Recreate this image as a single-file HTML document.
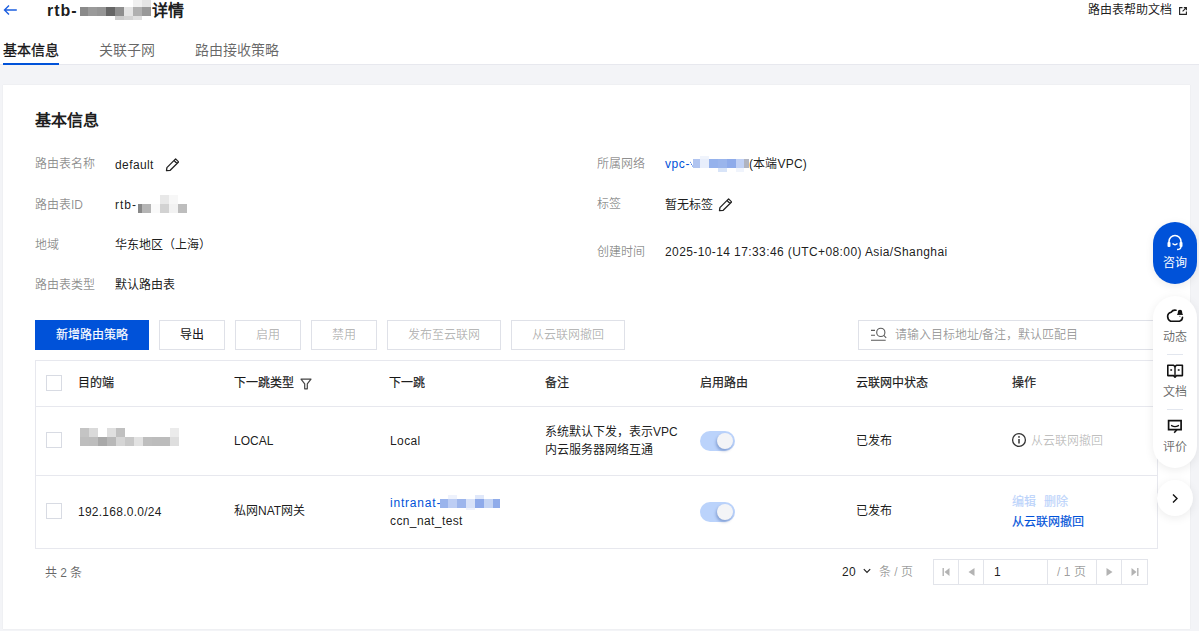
<!DOCTYPE html>
<html lang="zh-CN"><head><meta charset="utf-8">
<style>
*{box-sizing:border-box;margin:0;padding:0}
html,body{width:1199px;height:631px;overflow:hidden;background:#f3f4f7;font-family:"Liberation Sans",sans-serif;font-size:12px;color:rgba(0,0,0,.9)}
.a{position:absolute;white-space:nowrap;line-height:16px}
.l{letter-spacing:.4px}
.md{-webkit-text-stroke:.15px currentColor}
#hdr{position:absolute;left:0;top:0;width:1199px;height:65px;background:#fff;border-bottom:1px solid #e7e8ee}
#card{position:absolute;left:3px;top:85px;width:1187px;height:544px;background:#fff;box-shadow:0 0 1px rgba(0,0,0,.1)}
.lbl{color:rgba(0,0,0,.45)}
.m{position:absolute}
.btn{position:absolute;top:320px;height:30px;border:1px solid #dfe1e8;background:#fff;text-align:center;line-height:28px;color:rgba(0,0,0,.9)}
.btn.dis{color:rgba(0,0,0,.3)}
.th{position:absolute;top:375px;line-height:16px;-webkit-text-stroke:.25px currentColor;color:rgba(0,0,0,.85);white-space:nowrap}
.cb{position:absolute;width:16px;height:16px;border:1px solid #d8dbe3;background:#fff}
.sw{position:absolute;width:35px;height:20px;border-radius:10px;background:#bbd3fb}
.sw i{position:absolute;left:17px;top:2px;width:16px;height:16px;border-radius:50%;background:#f3f4f7;box-shadow:-1px 2px 3px rgba(0,40,120,.3)}
.pg{position:absolute;top:559px;height:26px;border:1px solid #e2e4ea}
</style></head><body>
<div id="hdr"></div>
<!-- back arrow -->
<svg class="m" style="left:3px;top:4px" width="16" height="12" viewBox="0 0 16 12"><path d="M6 1.5L1.5 6L6 10.5M1.5 6H13.8" fill="none" stroke="#1d5fe0" stroke-width="1.4"/></svg>
<div class="a" style="left:47px;top:1px;font-size:16px;font-weight:bold;line-height:20px;letter-spacing:1px">rtb-</div>
<!-- title mosaic -->
<div class="m" style="left:80px;top:7px;width:8px;height:9px;background:#8a8a8a"></div>
<div class="m" style="left:88px;top:7px;width:9px;height:9px;background:#9a9a9a"></div>
<div class="m" style="left:97px;top:7px;width:9px;height:9px;background:#959595"></div>
<div class="m" style="left:106px;top:7px;width:9px;height:9px;background:#666"></div>
<div class="m" style="left:115px;top:7px;width:9px;height:9px;background:#8e8e8e"></div>
<div class="m" style="left:124px;top:7px;width:9px;height:9px;background:#e4e4e4"></div>
<div class="m" style="left:133px;top:7px;width:9px;height:9px;background:#b0b0b0"></div>
<div class="m" style="left:142px;top:7px;width:9px;height:9px;background:#999"></div>
<div class="m" style="left:133px;top:0px;width:9px;height:7px;background:#f0f0f0"></div>
<div class="m" style="left:142px;top:0px;width:9px;height:7px;background:#e4e4e4"></div>
<div class="m" style="left:115px;top:16px;width:9px;height:4px;background:#ccc"></div>
<div class="m" style="left:124px;top:16px;width:9px;height:4px;background:#d4d4d4"></div>
<div class="m" style="left:133px;top:16px;width:9px;height:4px;background:#e0e0e0"></div>
<div class="a" style="left:152px;top:1px;font-size:16px;font-weight:bold;line-height:20px">详情</div>

<div class="a" style="left:1088px;top:2px">路由表帮助文档</div>
<svg class="m" style="left:1178px;top:6px" width="10" height="10" viewBox="0 0 10 10"><path d="M4.5 1.6H1.6V8.4H8.4V5.5M5.8 1.6H8.4V4.2M8.4 1.6L4.6 5.4" fill="none" stroke="#222" stroke-width="1.1"/></svg>
<!-- tabs -->
<div class="a" style="left:3px;top:40px;font-size:14px;line-height:20px;-webkit-text-stroke:.35px currentColor">基本信息</div>
<div class="a" style="left:99px;top:40px;font-size:14px;line-height:20px;color:rgba(0,0,0,.6)">关联子网</div>
<div class="a" style="left:195px;top:40px;font-size:14px;line-height:20px;color:rgba(0,0,0,.6)">路由接收策略</div>
<div class="m" style="left:3px;top:63px;width:56px;height:2px;background:#0052d9"></div>

<div id="card"></div>
<div class="a" style="left:35px;top:111px;font-size:16px;font-weight:bold;line-height:20px">基本信息</div>

<div class="a lbl" style="left:35px;top:156px">路由表名称</div>
<div class="a l" style="left:115px;top:157px">default</div>
<svg class="m" style="left:165px;top:158px" width="14" height="14" viewBox="0 0 14 14"><path d="M10.6 0.9L13.6 3.9L5.2 12.3L1.5 12.6L1.9 9.6Z M9 2.5L12 5.5" fill="none" stroke="#222" stroke-width="1.3" stroke-linejoin="round"/></svg>
<div class="a lbl" style="left:35px;top:197px">路由表ID</div>
<div class="a" style="left:115px;top:197px;letter-spacing:1px">rtb-</div>
<div class="m" style="left:138px;top:204px;width:4px;height:9px;background:#888"></div>
<div class="m" style="left:142px;top:204px;width:9px;height:9px;background:#b5b5b5"></div>
<div class="m" style="left:151px;top:204px;width:9px;height:9px;background:#fafafa"></div>
<div class="m" style="left:160px;top:204px;width:9px;height:9px;background:#d2d2d2"></div>
<div class="m" style="left:169px;top:204px;width:9px;height:9px;background:#f2f2f2"></div>
<div class="m" style="left:178px;top:204px;width:9px;height:9px;background:#bdbdbd"></div>
<div class="m" style="left:160px;top:195px;width:9px;height:9px;background:#e8e8e8"></div>
<div class="m" style="left:169px;top:195px;width:9px;height:9px;background:#f7f7f7"></div>
<div class="a lbl" style="left:35px;top:237px">地域</div>
<div class="a" style="left:115px;top:237px">华东地区（上海）</div>
<div class="a lbl" style="left:35px;top:277px">路由表类型</div>
<div class="a" style="left:115px;top:277px">默认路由表</div>

<div class="a lbl" style="left:597px;top:156px">所属网络</div>
<div class="a" style="left:665px;top:156px;color:#0052d9;letter-spacing:.6px">vpc-</div>
<div class="m" style="left:690px;top:161px;width:3px;height:7px;background:linear-gradient(60deg,transparent 45%,#4d7fe6 50%,transparent 62%)"></div>
<div class="m" style="left:693px;top:159px;width:7px;height:9px;background:#b0c4f0"></div>
<div class="m" style="left:700px;top:159px;width:9px;height:9px;background:#e8eefb"></div>
<div class="m" style="left:709px;top:159px;width:9px;height:9px;background:#95b2ec"></div>
<div class="m" style="left:718px;top:159px;width:9px;height:9px;background:#9ab5ec"></div>
<div class="m" style="left:727px;top:159px;width:9px;height:9px;background:#8eabea"></div>
<div class="m" style="left:736px;top:159px;width:8px;height:9px;background:#c0d0f4"></div>
<div class="m" style="left:744px;top:159px;width:5px;height:9px;background:#b0b4c0"></div>
<div class="m" style="left:700px;top:156px;width:9px;height:3px;background:#f0f4fc"></div>
<div class="m" style="left:718px;top:168px;width:9px;height:4px;background:#d8e4f8"></div>
<div class="m" style="left:736px;top:168px;width:8px;height:4px;background:#f0f4fc"></div>
<div class="a" style="left:749px;top:156px;letter-spacing:.2px">(本端VPC)</div>
<div class="a lbl" style="left:597px;top:196px">标签</div>
<div class="a" style="left:665px;top:197px">暂无标签</div>
<svg class="m" style="left:718px;top:198px" width="14" height="14" viewBox="0 0 14 14"><path d="M10.6 0.9L13.6 3.9L5.2 12.3L1.5 12.6L1.9 9.6Z M9 2.5L12 5.5" fill="none" stroke="#222" stroke-width="1.3" stroke-linejoin="round"/></svg>
<div class="a lbl" style="left:597px;top:244px">创建时间</div>
<div class="a l" style="left:665px;top:244px">2025-10-14 17:33:46 (UTC+08:00) Asia/Shanghai</div>

<!-- buttons -->
<div class="btn" style="left:35px;width:114px;background:#0052d9;border-color:#0052d9;color:#fff;-webkit-text-stroke:.15px currentColor">新增路由策略</div>
<div class="btn" style="left:159px;width:66px;-webkit-text-stroke:.15px currentColor">导出</div>
<div class="btn dis" style="left:235px;width:66px">启用</div>
<div class="btn dis" style="left:311px;width:66px">禁用</div>
<div class="btn dis" style="left:387px;width:114px">发布至云联网</div>
<div class="btn dis" style="left:511px;width:114px">从云联网撤回</div>
<div class="m" style="left:858px;top:320px;width:320px;height:30px;border:1px solid #dfe1e8"></div>
<svg class="m" style="left:870px;top:327px" width="18" height="15" viewBox="0 0 18 15"><path d="M1 3.4H5M1 8.3H5M1 13.3H15.7" fill="none" stroke="#5a5a5a" stroke-width="1.1"/><circle cx="10.8" cy="5.4" r="4.1" fill="none" stroke="#5a5a5a" stroke-width="1.1"/><path d="M13.8 8.4L16.2 10.8" stroke="#5a5a5a" stroke-width="1.1"/></svg>
<div class="a" style="left:895px;top:327px;color:rgba(0,0,0,.4)">请输入目标地址/备注，默认匹配目</div>

<!-- table -->
<div class="m" style="left:35px;top:360px;width:1123px;height:189px;border:1px solid #e7e8ee"></div>
<div class="m" style="left:36px;top:406px;width:1121px;height:1px;background:#e7e8ee"></div>
<div class="m" style="left:36px;top:475px;width:1121px;height:1px;background:#e7e8ee"></div>
<div class="cb" style="left:46px;top:375px"></div>
<div class="th" style="left:78px">目的端</div>
<div class="th" style="left:234px">下一跳类型</div>
<svg class="m" style="left:300px;top:378px" width="12" height="12" viewBox="0 0 12 12"><path d="M1 1.2H11L7.3 5.8V10.8H4.7V5.8Z" fill="none" stroke="#444" stroke-width="1.2" stroke-linejoin="round"/></svg>
<div class="th" style="left:389px">下一跳</div>
<div class="th" style="left:545px">备注</div>
<div class="th" style="left:700px">启用路由</div>
<div class="th" style="left:856px">云联网中状态</div>
<div class="th" style="left:1012px">操作</div>

<div class="cb" style="left:46px;top:432px"></div>
<!-- dest mosaic -->
<div class="m" style="left:80px;top:428px;width:9px;height:9px;background:#c4c4c4"></div>
<div class="m" style="left:89px;top:428px;width:9px;height:9px;background:#dadada"></div>
<div class="m" style="left:107px;top:428px;width:9px;height:9px;background:#dfdfdf"></div>
<div class="m" style="left:116px;top:428px;width:9px;height:9px;background:#c0c0c0"></div>
<div class="m" style="left:170px;top:428px;width:9px;height:9px;background:#ebebeb"></div>
<div class="m" style="left:80px;top:437px;width:9px;height:9px;background:#bebebe"></div>
<div class="m" style="left:89px;top:437px;width:9px;height:9px;background:#bdbdbd"></div>
<div class="m" style="left:98px;top:437px;width:9px;height:9px;background:#a9a9a9"></div>
<div class="m" style="left:107px;top:437px;width:9px;height:9px;background:#b8b8b8"></div>
<div class="m" style="left:116px;top:437px;width:9px;height:9px;background:#d5d5d5"></div>
<div class="m" style="left:125px;top:437px;width:9px;height:9px;background:#c8c8c8"></div>
<div class="m" style="left:134px;top:437px;width:9px;height:9px;background:#e2e2e2"></div>
<div class="m" style="left:143px;top:437px;width:9px;height:9px;background:#bebebe"></div>
<div class="m" style="left:152px;top:437px;width:18px;height:9px;background:#bcbcbc"></div>
<div class="m" style="left:170px;top:437px;width:9px;height:9px;background:#dedede"></div>
<div class="a" style="left:234px;top:433px">LOCAL</div>
<div class="a l" style="left:390px;top:433px">Local</div>
<div class="a" style="left:545px;top:423px;line-height:18px">系统默认下发，表示VPC<br>内云服务器网络互通</div>
<div class="sw" style="left:700px;top:431px"><i></i></div>
<div class="a" style="left:856px;top:433px">已发布</div>
<svg class="m" style="left:1011px;top:432px" width="16" height="16" viewBox="0 0 16 16"><circle cx="8" cy="8" r="6.4" fill="none" stroke="#333" stroke-width="1.3"/><path d="M8 7V11.5" stroke="#333" stroke-width="1.5"/><circle cx="8" cy="4.9" r=".9" fill="#333"/></svg>
<div class="a" style="left:1031px;top:433px;color:rgba(0,0,0,.26)">从云联网撤回</div>

<div class="cb" style="left:46px;top:503px"></div>
<div class="a" style="left:78px;top:504px;letter-spacing:.25px">192.168.0.0/24</div>
<div class="a" style="left:234px;top:503px">私网NAT网关</div>
<div class="a" style="left:390px;top:495px;color:#0052d9;letter-spacing:.8px">intranat-</div>
<div class="m" style="left:440px;top:499px;width:8px;height:9px;background:#9ab4ec"></div>
<div class="m" style="left:448px;top:499px;width:9px;height:9px;background:#bccdf4"></div>
<div class="m" style="left:457px;top:499px;width:9px;height:9px;background:#9cb5ec"></div>
<div class="m" style="left:466px;top:499px;width:9px;height:9px;background:#d8e2f8"></div>
<div class="m" style="left:475px;top:499px;width:9px;height:9px;background:#8eaaea"></div>
<div class="m" style="left:484px;top:499px;width:9px;height:9px;background:#c4d4f4"></div>
<div class="m" style="left:493px;top:499px;width:7px;height:9px;background:#90acea"></div>
<div class="m" style="left:448px;top:495px;width:9px;height:4px;background:#eef2fc"></div>
<div class="m" style="left:475px;top:495px;width:9px;height:4px;background:#e0e8fa"></div>
<div class="m" style="left:466px;top:508px;width:9px;height:2px;background:#eef2fc"></div>
<div class="a l" style="left:390px;top:513px">ccn_nat_test</div>
<div class="sw" style="left:700px;top:502px"><i></i></div>
<div class="a" style="left:856px;top:503px">已发布</div>
<div class="a md" style="left:1012px;top:494px;color:#bbd3fb">编辑</div>
<div class="a md" style="left:1044px;top:494px;color:#bbd3fb">删除</div>
<div class="a md" style="left:1012px;top:514px;color:#0052d9">从云联网撤回</div>

<!-- footer -->
<div class="a" style="left:45px;top:565px;color:rgba(0,0,0,.6)">共 2 条</div>
<div class="a l" style="left:842px;top:564px">20</div>
<svg class="m" style="left:862px;top:567px" width="10" height="8" viewBox="0 0 10 8"><path d="M1.8 2.2L5 5.4L8.2 2.2" fill="none" stroke="#222" stroke-width="1.2"/></svg>
<div class="a" style="left:879px;top:564px;color:rgba(0,0,0,.4)">条 / 页</div>
<div class="pg" style="left:933px;width:26px"></div>
<div class="pg" style="left:958px;width:26px"></div>
<div class="pg" style="left:983px;width:65px"></div>
<div class="pg" style="left:1047px;width:50px"></div>
<div class="pg" style="left:1096px;width:26px"></div>
<div class="pg" style="left:1121px;width:27px"></div>
<svg class="m" style="left:942px;top:568px" width="8" height="8" viewBox="0 0 8 8"><path d="M0.5 0V8H1.9V0Z M7.5 0V8L2.5 4Z" fill="#b3b3b3"/></svg>
<svg class="m" style="left:968px;top:568px" width="7" height="8" viewBox="0 0 7 8"><path d="M6.5 0V8L0.5 4Z" fill="#b3b3b3"/></svg>
<div class="a l" style="left:994px;top:564px">1</div>
<div class="a" style="left:1057px;top:564px;color:rgba(0,0,0,.4)">/ 1 页</div>
<svg class="m" style="left:1106px;top:568px" width="7" height="8" viewBox="0 0 7 8"><path d="M0.5 0V8L6.5 4Z" fill="#b3b3b3"/></svg>
<svg class="m" style="left:1131px;top:568px" width="8" height="8" viewBox="0 0 8 8"><path d="M0.5 0V8L5.5 4Z M6.1 0V8H7.5V0Z" fill="#b3b3b3"/></svg>

<!-- floating sidebar -->
<div class="m" style="left:1153px;top:222px;width:44px;height:62px;border-radius:22px;background:#0052d9;box-shadow:0 2px 8px rgba(0,0,0,.08)"></div>
<svg class="m" style="left:1166px;top:233.5px" width="18" height="17" viewBox="0 0 18 17"><path d="M3 9V7.5A6 6 0 0 1 15 7.5V9" fill="none" stroke="#fff" stroke-width="1.6"/><rect x="1.5" y="8" width="3" height="5" rx="1" fill="#fff"/><rect x="13.5" y="8" width="3" height="5" rx="1" fill="#fff"/><path d="M6.5 9.5Q9 12 11.5 9.5" fill="none" stroke="#fff" stroke-width="1.4"/><path d="M15 12.5Q15 15.5 11 15.5" fill="none" stroke="#fff" stroke-width="1.4"/></svg>
<div class="a" style="left:1163px;top:255px;color:#fff">咨询</div>
<div class="m" style="left:1153px;top:296px;width:44px;height:172px;border-radius:22px;background:#fff;box-shadow:0 2px 10px rgba(0,0,0,.08)"></div>
<svg class="m" style="left:1164px;top:307px" width="21" height="17" viewBox="0 0 21 17"><path d="M12 3.3Q9 2.6 7.1 5.3Q4 5.8 3.6 9Q3.6 12.8 6.6 14.2H15.5Q18.4 13.6 18.5 10.3" fill="none" stroke="#111" stroke-width="1.6" stroke-linecap="round"/><path d="M13.8 7.4V5A2.2 2.2 0 0 1 18.2 5V7.4Z" fill="#111"/><path d="M13.1 7.3H18.9" stroke="#111" stroke-width="1.1"/><circle cx="15.9" cy="9.3" r=".6" fill="#555"/></svg>
<div class="a" style="left:1163px;top:329px;color:rgba(0,0,0,.6)">动态</div>
<div class="m" style="left:1167px;top:354px;width:16px;height:1px;background:#e2e6ee"></div>
<svg class="m" style="left:1166px;top:364px" width="18" height="14" viewBox="0 0 18 14"><path d="M1.8 1.2H7.6L9 2.6L10.4 1.2H16.4V11.6H10.4L9 13.1L7.6 11.6H1.8Z" fill="none" stroke="#111" stroke-width="1.6" stroke-linejoin="round"/><path d="M9 2.5V12" stroke="#111" stroke-width="1.4"/><path d="M4.3 5.9H6.1M11.8 5.9H13.6" stroke="#111" stroke-width="1.5"/></svg>
<div class="a" style="left:1163px;top:384px;color:rgba(0,0,0,.6)">文档</div>
<div class="m" style="left:1167px;top:409px;width:16px;height:1px;background:#e2e6ee"></div>
<svg class="m" style="left:1166px;top:419px" width="17" height="15" viewBox="0 0 17 15"><path d="M2.6 1.6H15.1V10.6H2.6Z" fill="none" stroke="#111" stroke-width="1.7"/><path d="M10.8 10.8L8.2 13.7" stroke="#111" stroke-width="1.6"/><path d="M5.6 6.6Q9 8.6 12.4 6.6" fill="none" stroke="#111" stroke-width="1.4" stroke-linecap="round"/></svg>
<div class="a" style="left:1163px;top:439px;color:rgba(0,0,0,.6)">评价</div>
<div class="m" style="left:1157px;top:480px;width:36px;height:36px;border-radius:50%;background:#fff;box-shadow:0 2px 10px rgba(0,0,0,.08)"></div>
<svg class="m" style="left:1171px;top:493px" width="8" height="11" viewBox="0 0 8 11"><path d="M2 1.5L6 5.5L2 9.5" fill="none" stroke="#111" stroke-width="1.4"/></svg>
</body></html>
